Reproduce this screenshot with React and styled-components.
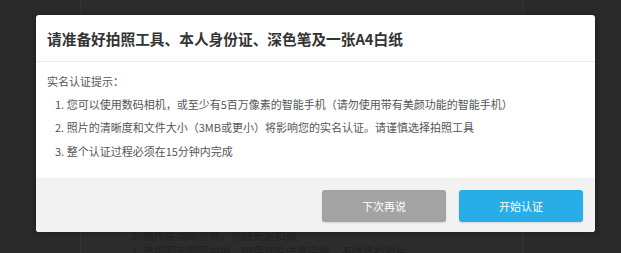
import React from 'react'
import styled, { createGlobalStyle } from 'styled-components'

const GlobalStyle = createGlobalStyle`
  html, body {
    margin: 0;
    padding: 0;
    background: #2a2a2a;
    font-family: "Noto Sans CJK SC", "Noto Sans", sans-serif;
  }
`

const Page = styled.div`
  width: 621px;
  height: 253px;
  overflow: hidden;
  position: relative;
`

const BackPanel = styled.div`
  margin-left: 80px;
  width: 444px;
  height: 100%;
  box-sizing: border-box;
  padding: 227px 0 0 50px;
  background: #2c2c2c;
  border-left: 1px solid #333;
  border-right: 1px solid #333;
`

const BackLine = styled.div`
  font-size: 11px;
  line-height: 16px;
  color: #222;
  white-space: nowrap;
`

const Overlay = styled.div`
  position: absolute;
  inset: 0;
  padding: 15px 0 0 36px;
`

const Modal = styled.div`
  width: 559px;
  height: 217px;
  display: flex;
  flex-direction: column;
  background: #fff;
  border-radius: 3px;
  box-shadow: 0 0 6px rgba(0, 0, 0, 0.35);
  overflow: hidden;
`

const Header = styled.div`
  height: 46px;
  flex-shrink: 0;
  display: flex;
  align-items: center;
  padding: 0 11px;
  border-bottom: 1px solid #ebebeb;
`

const Title = styled.h3`
  margin: 0;
  font-size: 14.7px;
  font-weight: 700;
  color: #333;
`

const Body = styled.div`
  flex: 1;
  padding: 8px 11px 0;
  color: #555;
  font-size: 11px;
`

const Label = styled.div`
  line-height: 23px;
`

const Steps = styled.ol`
  margin: 0;
  padding: 0 0 0 8px;
  list-style: none;
`

const Step = styled.li`
  line-height: 23.4px;
  white-space: nowrap;
`

const Footer = styled.div`
  height: 54px;
  flex-shrink: 0;
  box-sizing: border-box;
  display: flex;
  justify-content: flex-end;
  align-items: flex-start;
  gap: 13px;
  padding: 12px 12px 10px;
  background: #f2f2f2;
`

const Button = styled.button`
  width: 124px;
  height: 32px;
  border: none;
  border-radius: 3px;
  background: ${p => (p.$primary ? '#28ade7' : '#a3a3a3')};
  color: #fff;
  font-family: inherit;
  font-size: 11px;
  cursor: pointer;
  box-shadow: 0 1px 2px rgba(0, 0, 0, 0.12);
`

const steps = [
  '1. 您可以使用数码相机，或至少有5百万像素的智能手机（请勿使用带有美颜功能的智能手机）',
  '2. 照片的清晰度和文件大小（3MB或更小）将影响您的实名认证。请谨慎选择拍照工具',
  '3. 整个认证过程必须在15分钟内完成',
]

const App = () => {
  return (
    <Page>
      <GlobalStyle />
      <BackPanel>
        <BackLine>1. 照片需清晰可辨，光线充足拍摄</BackLine>
        <BackLine>2. 请按照示例图拍摄，确保证件信息完整，不得遮挡照片</BackLine>
      </BackPanel>

      <Overlay>
        <Modal>
          <Header>
            <Title>请准备好拍照工具、本人身份证、深色笔及一张A4白纸</Title>
          </Header>
          <Body>
            <Label>实名认证提示：</Label>
            <Steps>
              {steps.map(s => (
                <Step key={s}>{s}</Step>
              ))}
            </Steps>
          </Body>
          <Footer>
            <Button>下次再说</Button>
            <Button $primary>开始认证</Button>
          </Footer>
        </Modal>
      </Overlay>
    </Page>
  )
}

export default App
